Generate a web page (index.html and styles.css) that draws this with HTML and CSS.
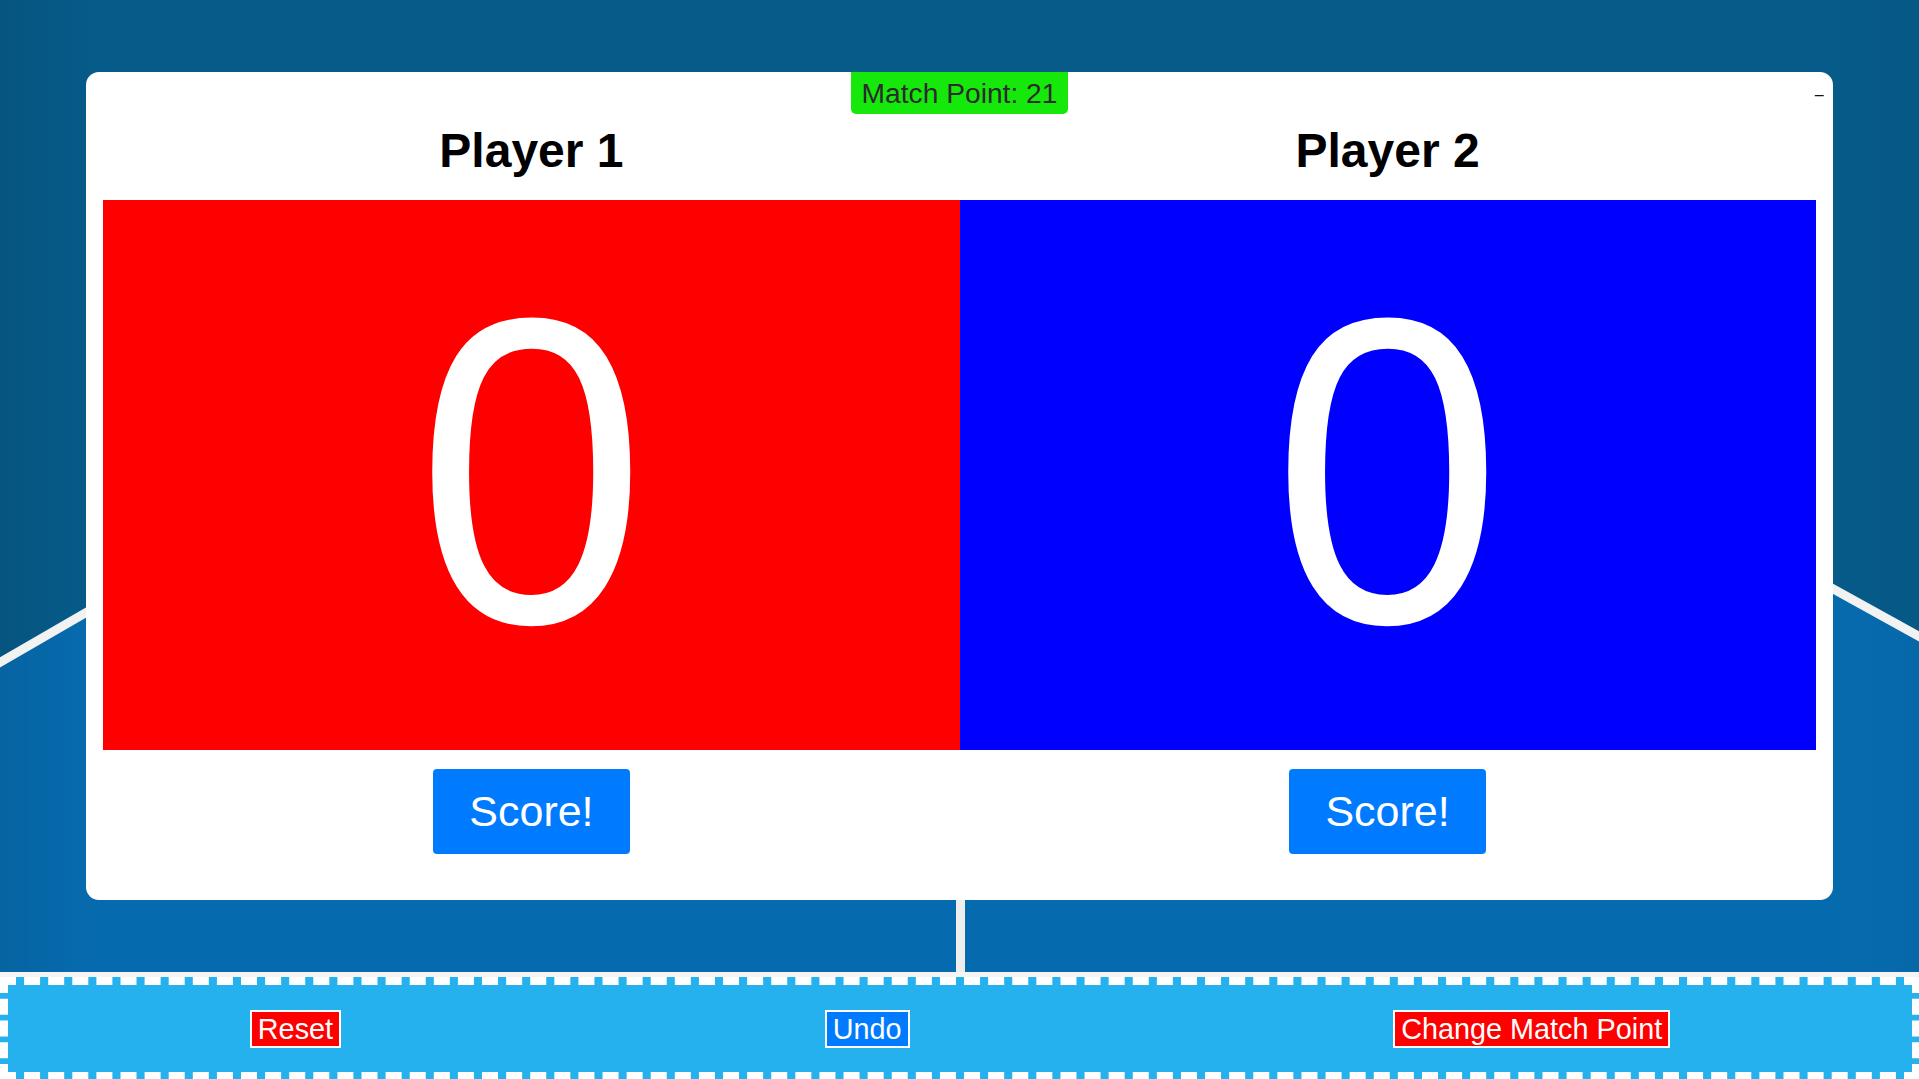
FILE: index.html
```html
<!DOCTYPE html>
<html lang="en">
<head>
<meta charset="utf-8">
<title>Scoreboard</title>
<link rel="stylesheet" href="styles.css">
</head>
<body>
<div class="stage">
  <svg class="court" viewBox="0 0 1919 972" preserveAspectRatio="none" aria-hidden="true">
    <defs>
      <linearGradient id="vig" x1="0" y1="0" x2="1" y2="0">
        <stop offset="0" stop-color="#000" stop-opacity="0.07"/>
        <stop offset="0.05" stop-color="#000" stop-opacity="0"/>
        <stop offset="0.95" stop-color="#000" stop-opacity="0"/>
        <stop offset="1" stop-color="#000" stop-opacity="0.03"/>
      </linearGradient>
    </defs>
    <rect width="1919" height="972" fill="#065b89"/>
    <polygon points="960,106 -20,674 -20,980 1940,980 1940,648" fill="#066bae"/>
    <rect width="1919" height="972" fill="url(#vig)"/>
    <line x1="960.5" y1="106" x2="-20" y2="674" stroke="#f1f2f2" stroke-width="9"/>
    <line x1="960.5" y1="106" x2="1940" y2="648" stroke="#f1f2f2" stroke-width="9"/>
    <line x1="960.5" y1="106" x2="960.5" y2="972" stroke="#eeeeee" stroke-width="9"/>
  </svg>
  <div class="card">
    <span class="minimize">–</span>
    <div class="badge-row"><div class="badge">Match Point: 21</div></div>
    <div class="players">
      <div class="player">
        <h2 class="name">Player 1</h2>
        <div class="score-box red"><span class="score">0</span></div>
        <button class="score-btn">Score!</button>
      </div>
      <div class="player">
        <h2 class="name">Player 2</h2>
        <div class="score-box blue"><span class="score">0</span></div>
        <button class="score-btn">Score!</button>
      </div>
    </div>
  </div>
</div>
<footer class="controls">
  <button class="ctrl ctrl-red">Reset</button>
  <button class="ctrl ctrl-blue">Undo</button>
  <button class="ctrl ctrl-red">Change Match Point</button>
</footer>
</body>
</html>
```
FILE: styles.css
```css
* { box-sizing: border-box; }
html, body { margin: 0; padding: 0; }
body {
  background: #f4f4f4;
  font-family: "Liberation Sans", Arial, sans-serif;
  overflow: hidden;
  width: 1919px;
  height: 1079px;
}
.stage {
  position: relative;
  height: 972px;
  display: flex;
  align-items: center;
  justify-content: center;
}
.court {
  position: absolute;
  inset: 0;
  width: 100%;
  height: 100%;
  display: block;
}
.card {
  position: relative;
  z-index: 1;
  width: 91%;
  height: 828px;
  background: #fff;
  border-radius: 13px;
  padding: 0 17px 46px;
}
.minimize {
  position: absolute;
  top: 14px;
  right: 9px;
  font-size: 16px;
  line-height: normal;
  color: #111;
}
.badge-row {
  display: flex;
  justify-content: center;
}
.badge {
  background: #17e80c;
  color: #2b2b2b;
  font-size: 28.2px;
  line-height: 42px;
  height: 42px;
  padding: 0 11px;
  border-radius: 0 0 5px 5px;
}
.players {
  display: grid;
  grid-template-columns: 1fr 1fr;
}
.player {
  display: flex;
  flex-direction: column;
  align-items: center;
}
.name {
  margin: 8px 0 20px;
  font-size: 48px;
  font-weight: bold;
  line-height: 58px;
  color: #000;
}
.score-box {
  align-self: stretch;
  height: 550px;
  padding-bottom: 8px;
  display: flex;
  align-items: center;
  justify-content: center;
  overflow: hidden;
}
.red { background: #ff0000; }
.blue { background: #0000ff; }
.score {
  color: #fff;
  font-size: 436px;
  line-height: 1;
  transform: scaleX(0.95);
}
.score-btn {
  margin-top: 19px;
  height: 85px;
  padding: 0 36px;
  border: none;
  border-radius: 4px;
  background: #007bff;
  color: #fff;
  font-family: "Liberation Sans", Arial, sans-serif;
  font-size: 43px;
  line-height: 85px;
}
.controls {
  margin-top: 5px;
  width: 1920px;
  height: 103px;
  background: #24b1ee;
  border: 8px dashed #fff;
  display: flex;
  justify-content: space-around;
  align-items: center;
}
.ctrl {
  font-family: "Liberation Sans", Arial, sans-serif;
  font-size: 28.8px;
  line-height: 32px;
  padding: 1px 6px;
  border: 2px solid #fff;
  color: #fff;
  border-radius: 0;
}
.ctrl-red { background: #ff0000; }
.ctrl-blue { background: #007bff; }
```
